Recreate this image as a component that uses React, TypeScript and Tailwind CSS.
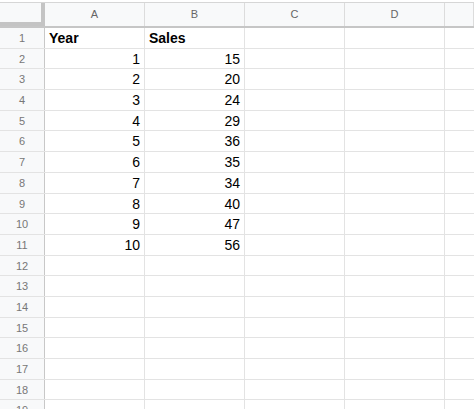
import React from 'react';

const data: [number, number][] = [
    [1, 15], [2, 20], [3, 24], [4, 29], [5, 36],
    [6, 35], [7, 34], [8, 40], [9, 47], [10, 56],
];

const cols = ['A', 'B', 'C', 'D', ''];

const Row: React.FC<{ n: number; a?: React.ReactNode; b?: React.ReactNode; bold?: boolean }> = ({ n, a, b, bold }) => {
    const cell = bold
        ? 'px-[4px] text-left font-bold'
        : 'px-[4px] text-right';
    return (
        <div className="flex h-[20.7px] shrink-0 border-b border-[#e3e3e3] text-[14px] leading-[20px] text-black">
            <div className="w-[45px] shrink-0 border-r border-[#c8c8c8] bg-[#f8f9fa] text-center text-[11px] text-[#777]">
                {n}
            </div>
            <div className={`w-[100px] shrink-0 border-r border-[#e3e3e3] ${cell}`}>{a}</div>
            <div className={`w-[100px] shrink-0 border-r border-[#e3e3e3] ${cell}`}>{b}</div>
            <div className="w-[100px] shrink-0 border-r border-[#e3e3e3]" />
            <div className="w-[100px] shrink-0 border-r border-[#e3e3e3]" />
            <div className="flex-1" />
        </div>
    );
};

const App: React.FC = () => {
    const empty = [12, 13, 14, 15, 16, 17, 18, 19];
    return (
        <div className="flex h-[409px] w-[474px] flex-col overflow-hidden bg-white pt-[2px] font-['Liberation_Sans',Arial,sans-serif]">
            {/* column headers */}
            <div className="flex h-[26px] shrink-0 border-t border-[#d6d6d6] border-b-2 border-b-[#c6c6c6] bg-[#f8f9fa] text-[11px] text-[#666]">
                <div className="w-[45px] shrink-0 border-r-4 border-b-4 border-[#c4c4c4] bg-[#f8f9fa]" />
                {cols.map((c, i) => (
                    <div
                        key={i}
                        className={`flex items-center justify-center border-r border-[#dcdcdc] ${c ? 'w-[100px] shrink-0' : 'flex-1'}`}
                    >
                        {c}
                    </div>
                ))}
            </div>
            <Row n={1} a="Year" b="Sales" bold />
            {data.map(([y, s], i) => (
                <Row key={y} n={i + 2} a={y} b={s} />
            ))}
            {empty.map((n) => (
                <Row key={n} n={n} />
            ))}
        </div>
    );
};

export default App;
